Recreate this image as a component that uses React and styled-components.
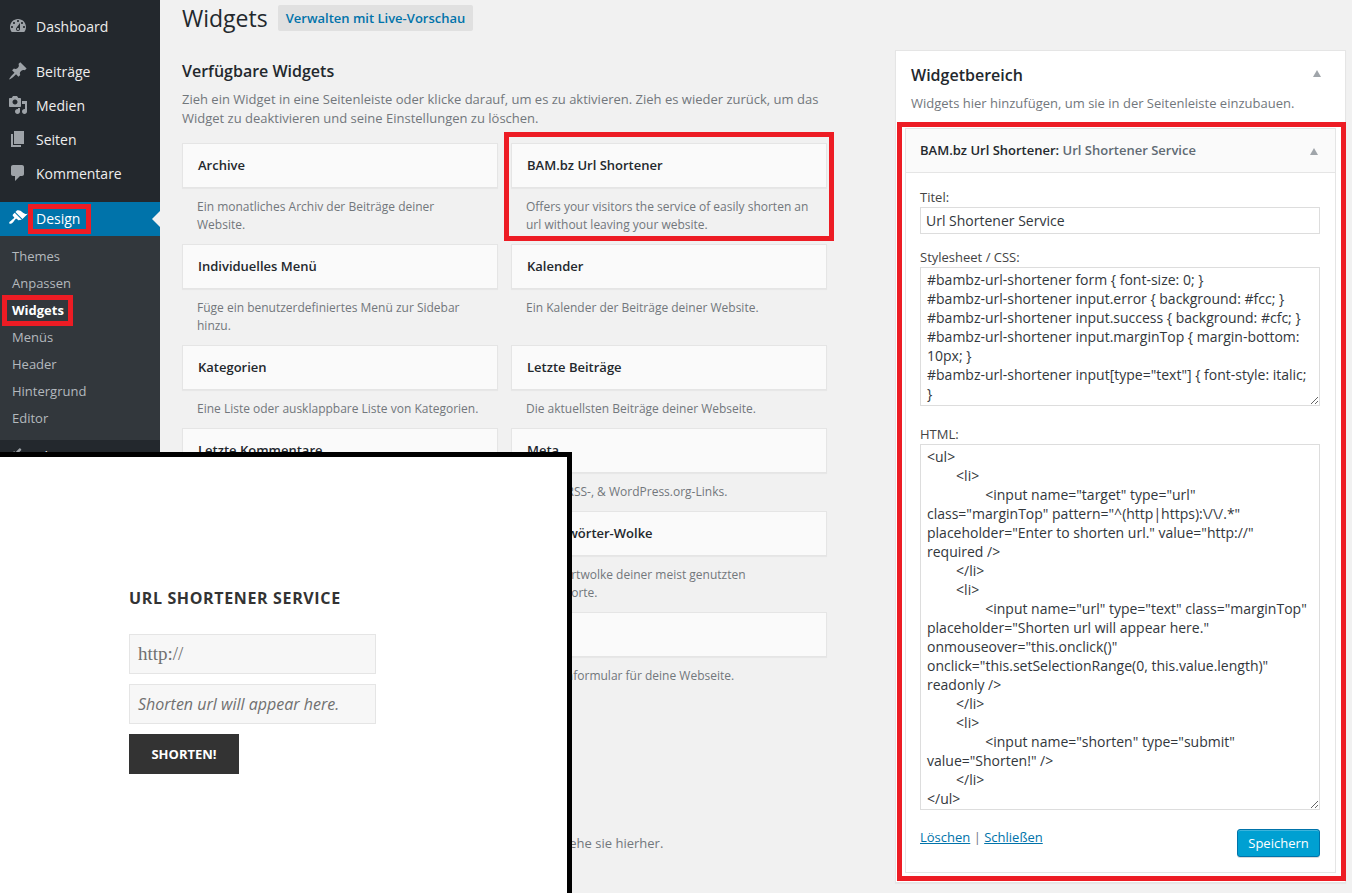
import React from 'react';
import styled, { createGlobalStyle } from 'styled-components';

const GlobalStyle = createGlobalStyle`
  html, body {
    margin: 0;
    padding: 0;
    height: 893px;
    overflow: hidden;
    background: #f1f1f1;
    font-family: "Open Sans", "Liberation Sans", sans-serif;
    font-size: 13px;
    color: #444;
  }
  * { box-sizing: border-box; }
`;

const Page = styled.div`
  position: relative;
  display: flex;
  width: 1352px;
  height: 893px;
  overflow: hidden;
`;

const Sidebar = styled.nav`
  flex: 0 0 160px;
  background: #23282d;
  padding-top: 10px;
`;

const MenuItem = styled.div`
  position: relative;
  display: flex;
  align-items: center;
  height: 34px;
  padding: 0 0 2px 8px;
  gap: 8px;
  font-size: 14px;
  color: ${p => (p.$active ? '#fff' : '#eee')};
  background: ${p => (p.$active ? '#0073aa' : 'transparent')};
  margin-top: ${p => (p.$separated ? '11px' : '0')};

  svg {
    flex: 0 0 20px;
    width: 20px;
    height: 20px;
    fill: ${p => (p.$active ? '#fff' : '#9ea3a8')};
  }
`;

const ActiveArrow = styled.span`
  position: absolute;
  right: 0;
  top: 50%;
  margin-top: -8px;
  border: 8px solid transparent;
  border-right-color: #f1f1f1;
  border-left-width: 0;
`;

const SubMenu = styled.div`
  background: #32373c;
  padding: 7px 0 8px;
`;

const SubItem = styled.div`
  height: 27px;
  line-height: 27px;
  padding-left: 12px;
  font-size: 13px;
  font-weight: ${p => (p.$current ? 700 : 400)};
  color: ${p => (p.$current ? '#fff' : '#b4b9be')};
`;

const Main = styled.main`
  flex: 1;
  display: flex;
  padding-left: 22px;
`;

const LeftColumn = styled.section`
  flex: 0 0 668px;
`;

const TitleRow = styled.div`
  display: flex;
  align-items: center;
  gap: 10px;
  height: 35px;
`;

const PageTitle = styled.h1`
  margin: 0;
  font-size: 23px;
  font-weight: 400;
  color: #23282d;
`;

const PreviewLink = styled.a`
  display: block;
  height: 26px;
  line-height: 26px;
  padding: 0 8px;
  border-radius: 2px;
  background: #e0e0e0;
  color: #0073aa;
  font-size: 13px;
  font-weight: 600;
`;

const SectionTitle = styled.h2`
  margin: 25px 0 0;
  font-size: 16px;
  line-height: 22px;
  font-weight: 600;
  color: #23282d;
`;

const SectionText = styled.p`
  margin: 8px 0 0;
  width: 650px;
  line-height: 19px;
  color: #72777c;
`;

const WidgetGrid = styled.div`
  display: grid;
  grid-template-columns: 316px 316px;
  column-gap: 13px;
  margin-top: 15px;
`;

const Widget = styled.div`
  min-height: ${p => (p.$tall ? '101px' : '83px')};
`;

const WidgetCard = styled.div`
  height: 45px;
  line-height: 43px;
  padding-left: 15px;
  background: #fafafa;
  border: 1px solid #e5e5e5;
  box-shadow: 0 1px 1px rgba(0, 0, 0, 0.04);
  font-weight: 600;
  color: #23282d;
`;

const WidgetText = styled.p`
  margin: 10px 0 0;
  padding: 0 15px;
  font-size: 12px;
  line-height: 18px;
  color: #72777c;
`;

const TrashHint = styled.p`
  margin: 139px 0 0;
  padding-left: 10px;
  line-height: 19px;
  color: #72777c;
`;

const AreaPanel = styled.aside`
  flex: 0 0 449px;
  height: 833px;
  margin: 50px 0 0 45px;
  padding: 0 9px;
  background: #fff;
  border: 1px solid #e5e5e5;
  box-shadow: 0 1px 1px rgba(0, 0, 0, 0.04);
`;

const AreaHead = styled.div`
  position: relative;
  height: 77px;
  padding: 13px 6px 0;
`;

const AreaTitle = styled.h2`
  margin: 0;
  font-size: 16px;
  line-height: 22px;
  font-weight: 600;
  color: #23282d;
`;

const AreaText = styled.p`
  margin: 8px 0 0;
  line-height: 19px;
  color: #72777c;
`;

const Caret = styled.span`
  position: absolute;
  right: ${p => p.$right}px;
  top: ${p => p.$top}px;
  border: 4px solid transparent;
  border-top-width: 0;
  border-left-width: 4.5px;
  border-right-width: 4.5px;
  border-bottom: 7px solid #a0a5aa;
`;

const EditWidget = styled.div`
  width: 431px;
  height: 745px;
  border: 1px solid #e5e5e5;
`;

const EditHead = styled.div`
  position: relative;
  height: 44px;
  line-height: 43px;
  padding-left: 14px;
  background: #fafafa;
  border-bottom: 1px solid #e5e5e5;
  font-weight: 600;
  color: #23282d;

  span {
    color: #606a73;
  }
`;

const EditBody = styled.form`
  padding: 15px 15px 0 14px;
`;

const FieldLabel = styled.label`
  display: block;
  line-height: 19px;
  color: #444;
`;

const TitleInput = styled.input`
  display: block;
  width: 400px;
  height: 27px;
  margin-bottom: 14px;
  padding: 0 5px;
  border: 1px solid #ddd;
  background: #fff;
  color: #32373c;
  font: 14px "Open Sans", sans-serif;
  outline: none;
`;

const CodeArea = styled.textarea`
  display: block;
  width: 400px;
  height: ${p => p.$h}px;
  margin-bottom: 19px;
  padding: 2px 6px;
  border: 1px solid #ddd;
  background: #fff;
  color: #32373c;
  font: 14px/19px "Open Sans", sans-serif;
  overflow: hidden;
  outline: none;
  resize: vertical;
`;

const ActionRow = styled.div`
  display: flex;
  justify-content: space-between;
`;

const LinkGroup = styled.div`
  margin-top: -1px;
  line-height: 19px;
  color: #72777c;

  a {
    color: #0073aa;
    text-decoration: underline;
  }
`;

const SaveButton = styled.button`
  width: 83px;
  height: 28px;
  padding: 0;
  background: #00a0d2;
  border: 1px solid #0073aa;
  border-radius: 3px;
  box-shadow: inset 0 1px 0 rgba(120, 200, 230, 0.5), 0 1px 0 rgba(0, 0, 0, 0.15);
  color: #fff;
  font: 13px "Open Sans", sans-serif;
`;

const RedFrame = styled.div`
  position: absolute;
  left: ${p => p.$x}px;
  top: ${p => p.$y}px;
  width: ${p => p.$w}px;
  height: ${p => p.$h}px;
  border: 5px solid #ed1c24;
  pointer-events: none;
`;

const FrontPreview = styled.div`
  position: absolute;
  left: 0;
  top: 452px;
  width: 572px;
  height: 441px;
  padding: 131px 0 0 129px;
  background: #fff;
  border-top: 5px solid #000;
  border-right: 5px solid #000;
`;

const FrontTitle = styled.h3`
  margin: 0 0 26px;
  font-size: 16px;
  line-height: 20px;
  font-weight: 700;
  letter-spacing: 0.64px;
  text-transform: uppercase;
  color: #333;
`;

const FrontInput = styled.div`
  width: 247px;
  height: 40px;
  line-height: 38px;
  margin-bottom: 10px;
  padding-left: 8px;
  background: #f7f7f7;
  border: 1px solid #e5e5e5;
  color: #707070;
  font-family: ${p => (p.$serif ? '"Liberation Serif", serif' : '"Open Sans", sans-serif')};
  font-style: ${p => (p.$serif ? 'normal' : 'italic')};
  font-size: ${p => (p.$serif ? '19px' : '16px')};
`;

const FrontButton = styled.button`
  display: block;
  width: 110px;
  height: 40px;
  padding: 0;
  background: #333;
  border: 0;
  color: #fff;
  font: 700 13px "Open Sans", sans-serif;
  text-transform: uppercase;
`;

const icons = {
  dashboard: 'M3.76 16h12.48c1.1-1.37 1.76-3.11 1.76-5 0-4.42-3.58-8-8-8s-8 3.58-8 8c0 1.89.66 3.63 1.76 5zM10 4c.55 0 1 .45 1 1s-.45 1-1 1-1-.45-1-1 .45-1 1-1zM6 6c.55 0 1 .45 1 1s-.45 1-1 1-1-.45-1-1 .45-1 1-1zm8 0c.55 0 1 .45 1 1s-.45 1-1 1-1-.45-1-1 .45-1 1-1zm-5.37 5.55L12 7v6c0 1.1-.9 2-2 2s-2-.9-2-2c0-.57.24-1.08.63-1.45zM4 10c.55 0 1 .45 1 1s-.45 1-1 1-1-.45-1-1 .45-1 1-1zm12 0c.55 0 1 .45 1 1s-.45 1-1 1-1-.45-1-1 .45-1 1-1zm-5 3c0-.55-.45-1-1-1s-1 .45-1 1 .45 1 1 1 1-.45 1-1z',
  post: 'M10.44 3.02l1.82-1.82 6.36 6.35-1.83 1.82c-1.05-.68-2.48-.57-3.41.36l-.75.75c-.92.93-1.04 2.35-.35 3.41l-1.83 1.82-2.41-2.41-2.8 2.79c-.42.42-3.38 2.71-3.8 2.29s1.86-3.39 2.28-3.81l2.79-2.79L4.1 9.36l1.83-1.82c1.05.69 2.48.57 3.4-.36l.75-.75c.93-.92 1.05-2.35.36-3.41z',
  media: 'M13 11V4c0-.55-.45-1-1-1h-1.67L9 1H5L3.67 3H2c-.55 0-1 .45-1 1v7c0 .55.45 1 1 1h10c.55 0 1-.45 1-1zM7 4.5c1.38 0 2.5 1.12 2.5 2.5S8.38 9.5 7 9.5 4.5 8.38 4.5 7 5.62 4.5 7 4.5zM14 6h5v10.5c0 1.38-1.12 2.5-2.5 2.5S14 17.88 14 16.5s1.12-2.5 2.5-2.5c.17 0 .34.02.5.05V9h-3V6zm-4 8.05V13h2v3.5c0 1.38-1.12 2.5-2.5 2.5S7 17.88 7 16.5 8.12 14 9.5 14c.17 0 .34.02.5.05z',
  page: 'M6 15V2h10v13H6zm-1 1h8v2H3V5h2v11z',
  comments: 'M5 2h9c1.1 0 2 .9 2 2v7c0 1.1-.9 2-2 2h-2l-5 5v-5H5c-1.1 0-2-.9-2-2V4c0-1.1.9-2 2-2z',
  appearance: 'M14.48 11.06L7.41 3.99l1.5-1.5c.5-.56 2.3-.47 3.51.32 1.21.8 1.43 1.28 2.91 2.1 1.18.64 2.45 1.26 4.45.85zm-.71.71L6.7 4.7 4.93 6.47c-.39.39-.39 1.02 0 1.41l1.06 1.06c.39.39.39 1.03 0 1.42-.6.6-1.43 1.11-2.21 1.69-.35.26-.7.53-1.01.84C1.43 13.23.76 14.82 1.43 15.5s2.27 0 3.61-1.35c.31-.31.58-.66.85-1.02.57-.78 1.08-1.61 1.69-2.21.39-.39 1.02-.39 1.41 0l1.06 1.06c.39.39 1.02.39 1.41 0z',
  plugins: 'M13.11 4.36L9.87 7.6 8 5.73l3.24-3.24c.35-.34 1.05-.2 1.56.32.52.51.66 1.21.31 1.55zm-8 1.77l.91-1.12 9.01 9.01-1.19.84c-.71.71-2.63 1.16-3.82 1.16H6.14L4.9 17.26c-.59.59-1.54.59-2.12 0-.59-.58-.59-1.53 0-2.12l1.24-1.24v-3.88c0-1.13.4-3.19 1.09-3.89zm7.26 3.97l3.24-3.24c.34-.35 1.04-.21 1.55.31.52.51.66 1.21.31 1.55l-3.24 3.25z'
};

const Icon = ({ name }) => (
  <svg viewBox="0 0 20 20" aria-hidden="true">
    <path fillRule="evenodd" d={icons[name]} />
  </svg>
);

const widgets = [
  ['Archive', 'Ein monatliches Archiv der Beiträge deiner Website.', true],
  ['BAM.bz Url Shortener', 'Offers your visitors the service of easily shorten an url without leaving your website.', true],
  ['Individuelles Menü', 'Füge ein benutzerdefiniertes Menü zur Sidebar hinzu.', true],
  ['Kalender', 'Ein Kalender der Beiträge deiner Website.', true],
  ['Kategorien', 'Eine Liste oder ausklappbare Liste von Kategorien.'],
  ['Letzte Beiträge', 'Die aktuellsten Beiträge deiner Webseite.'],
  ['Letzte Kommentare', 'Die aktuellsten Kommentare deiner Webseite.'],
  ['Meta', 'Login-, RSS-, & WordPress.org-Links.'],
  ['RSS', 'Einträge aus einem RSS- oder Atom-Feed.', true],
  ['Schlagwörter-Wolke', 'Eine Wortwolke deiner meist genutzten Schlagworte.', true],
  ['Seiten', 'Eine Liste der Seiten deiner Webseite.'],
  ['Suche', 'Ein Suchformular für deine Webseite.']
];

const cssCode = `#bambz-url-shortener form { font-size: 0; }
#bambz-url-shortener input.error { background: #fcc; }
#bambz-url-shortener input.success { background: #cfc; }
#bambz-url-shortener input.marginTop { margin-bottom: 10px; }
#bambz-url-shortener input[type="text"] { font-style: italic; }`;

const htmlCode = `<ul>
\t<li>
\t\t<input name="target" type="url" class="marginTop" pattern="^(http|https):\\/\\/.*" placeholder="Enter to shorten url." value="http://" required />
\t</li>
\t<li>
\t\t<input name="url" type="text" class="marginTop" placeholder="Shorten url will appear here." onmouseover="this.onclick()" onclick="this.setSelectionRange(0, this.value.length)" readonly />
\t</li>
\t<li>
\t\t<input name="shorten" type="submit" value="Shorten!" />
\t</li>
</ul>`;

export default function App() {
  return (
    <Page>
      <GlobalStyle />
      <Sidebar>
        <MenuItem><Icon name="dashboard" />Dashboard</MenuItem>
        <MenuItem $separated><Icon name="post" />Beiträge</MenuItem>
        <MenuItem><Icon name="media" />Medien</MenuItem>
        <MenuItem><Icon name="page" />Seiten</MenuItem>
        <MenuItem><Icon name="comments" />Kommentare</MenuItem>
        <MenuItem $separated $active>
          <Icon name="appearance" />Design
          <ActiveArrow />
        </MenuItem>
        <SubMenu>
          <SubItem>Themes</SubItem>
          <SubItem>Anpassen</SubItem>
          <SubItem $current>Widgets</SubItem>
          <SubItem>Menüs</SubItem>
          <SubItem>Header</SubItem>
          <SubItem>Hintergrund</SubItem>
          <SubItem>Editor</SubItem>
        </SubMenu>
        <MenuItem><Icon name="plugins" />Plugins</MenuItem>
      </Sidebar>

      <Main>
        <LeftColumn>
          <TitleRow>
            <PageTitle>Widgets</PageTitle>
            <PreviewLink>Verwalten mit Live-Vorschau</PreviewLink>
          </TitleRow>
          <SectionTitle>Verfügbare Widgets</SectionTitle>
          <SectionText>
            Zieh ein Widget in eine Seitenleiste oder klicke darauf, um es zu aktivieren. Zieh es wieder zurück, um das Widget zu deaktivieren und seine Einstellungen zu löschen.
          </SectionText>
          <WidgetGrid>
            {widgets.map(([title, text, tall]) => (
              <Widget key={title} $tall={tall}>
                <WidgetCard>{title}</WidgetCard>
                <WidgetText>{text}</WidgetText>
              </Widget>
            ))}
          </WidgetGrid>
          <TrashHint>Um Widgets zu entfernen und ihre Einstellungen zu löschen, ziehe sie hierher.</TrashHint>
        </LeftColumn>

        <AreaPanel>
          <AreaHead>
            <AreaTitle>Widgetbereich</AreaTitle>
            <AreaText>Widgets hier hinzufügen, um sie in der Seitenleiste einzubauen.</AreaText>
            <Caret $right={15} $top={19} />
          </AreaHead>
          <EditWidget>
            <EditHead>
              BAM.bz Url Shortener: <span>Url Shortener Service</span>
              <Caret $right={17} $top={19} />
            </EditHead>
            <EditBody>
              <FieldLabel>Titel:</FieldLabel>
              <TitleInput readOnly value="Url Shortener Service" />
              <FieldLabel>Stylesheet / CSS:</FieldLabel>
              <CodeArea $h={139} readOnly value={cssCode} />
              <FieldLabel>HTML:</FieldLabel>
              <CodeArea $h={366} readOnly value={htmlCode} />
              <ActionRow>
                <LinkGroup><a>Löschen</a> | <a>Schließen</a></LinkGroup>
                <SaveButton type="button">Speichern</SaveButton>
              </ActionRow>
            </EditBody>
          </EditWidget>
        </AreaPanel>
      </Main>

      <RedFrame $x={28} $y={204} $w={63} $h={30} />
      <RedFrame $x={2} $y={295} $w={71} $h={31} />
      <RedFrame $x={504} $y={132} $w={330} $h={109} />
      <RedFrame $x={897} $y={122} $w={449} $h={759} />

      <FrontPreview>
        <FrontTitle>Url Shortener Service</FrontTitle>
        <FrontInput $serif>http://</FrontInput>
        <FrontInput>Shorten url will appear here.</FrontInput>
        <FrontButton type="button">Shorten!</FrontButton>
      </FrontPreview>
    </Page>
  );
}
